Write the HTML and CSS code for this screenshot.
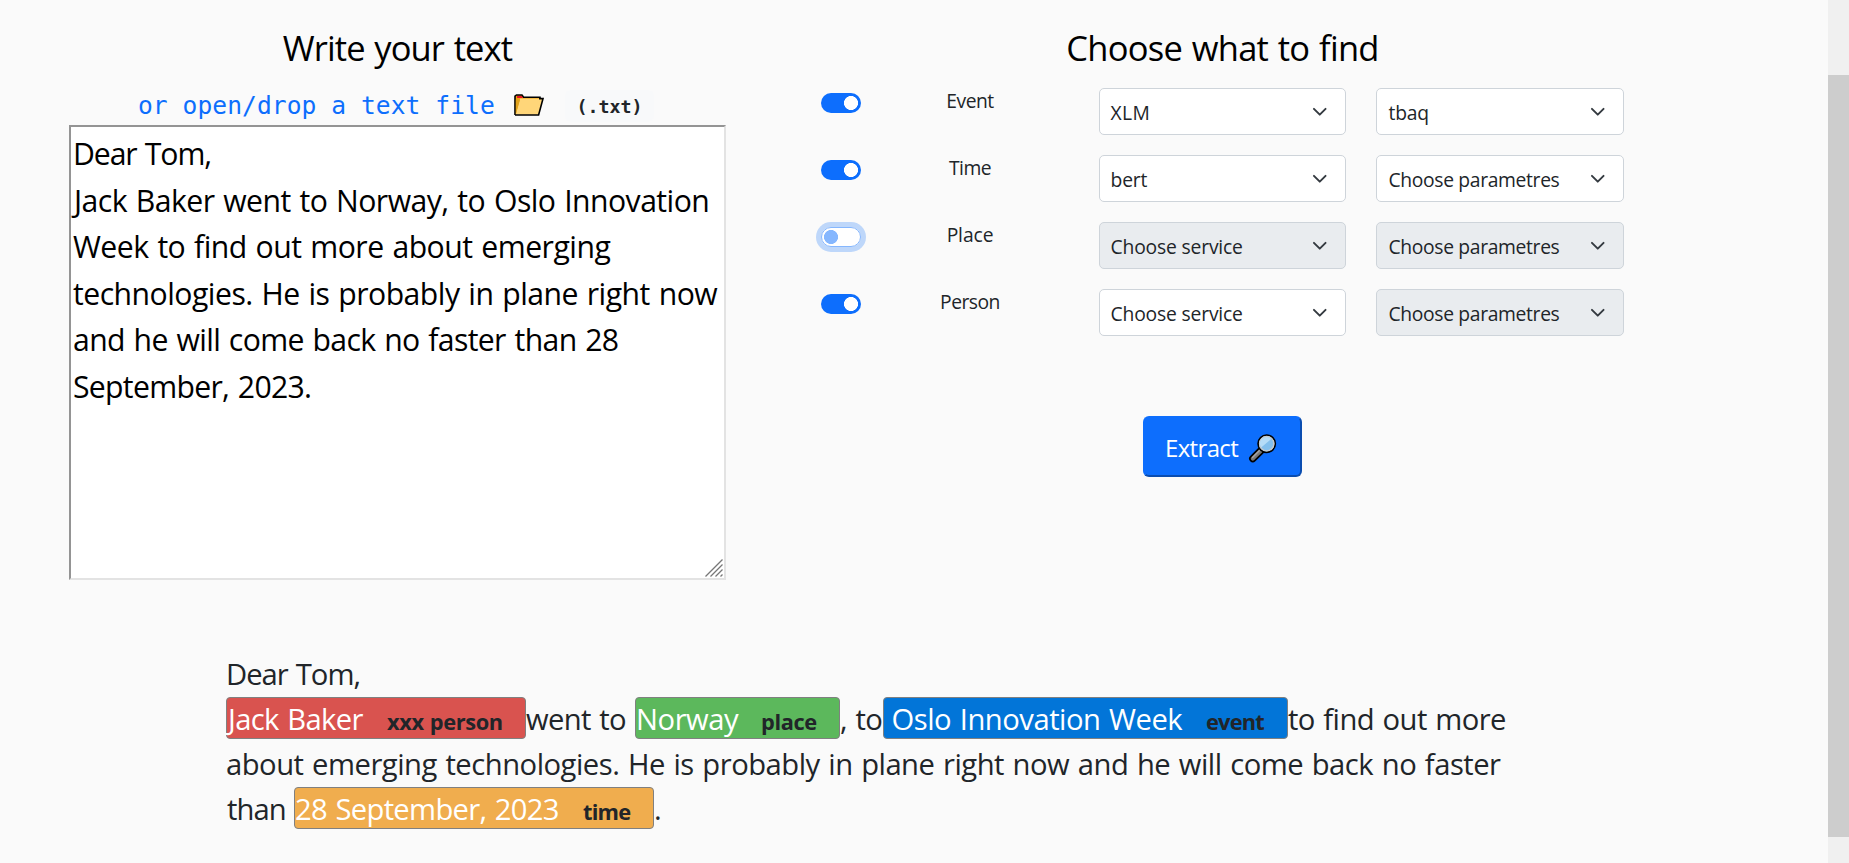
FILE: index.html
```
<!DOCTYPE html>
<html lang="en">
<head>
<meta charset="utf-8">
<title>Text extraction</title>
<link rel="stylesheet" href="styles.css">
</head>
<body>
<div class="page">
  <main class="content">
    <div class="top">
      <section class="editor">
        <h2 class="title title-write">Write your text</h2>
        <div class="file-row">
          <a class="file-link">or open/drop a text file</a>
          <svg class="folder" viewBox="0 0 30 22" width="30" height="22">
            <path d="M1 21V2.2L2.5 1H8l1.6 2.2H26V6" fill="#f0a30a" stroke="#000" stroke-width="1.6"/>
            <path d="M3 2h4.6l1.4 2H3z" fill="#e81224"/>
            <path d="M1.8 20 6.2 4.6H28.8L24.6 20.8H1.8z" fill="#ffd679"/>
            <path d="M1.8 20.5V5.4H6z" fill="#e0a21c"/>
            <path d="M1 21H24.6L29 4.6H25" fill="none" stroke="#000" stroke-width="1.6"/>
          </svg>
          <span class="badge">(.txt)</span>
        </div>
        <div class="textarea">
          <p class="ta1">Dear Tom,</p>
          <p class="ta2">Jack Baker went to Norway, to Oslo Innovation</p>
          <p class="ta3">Week to find out more about emerging</p>
          <p class="ta4">technologies. He is probably in plane right now</p>
          <p class="ta5">and he will come back no faster than 28</p>
          <p class="ta6">September, 2023.</p>
          <svg class="grip" viewBox="0 0 18 18" width="18" height="18"><path d="M.5 17.5l17-17M5.5 17.5l12-12M10.5 17.5l7-7M15.5 17.5l2-2" stroke="#777" stroke-width="1.3" fill="none"/></svg>
        </div>
      </section>
      <section class="chooser">
        <h2 class="title title-choose">Choose what to find</h2>
        <div class="row">
          <span class="switch on"></span><span class="label ev">Event</span>
          <div class="select"><span class="xlm">XLM</span><svg class="chev" viewBox="0 0 16 16"><path d="M2 5l6 6 6-6"/></svg></div>
          <div class="select param"><span>tbaq</span><svg class="chev" viewBox="0 0 16 16"><path d="M2 5l6 6 6-6"/></svg></div>
        </div>
        <div class="row">
          <span class="switch on"></span><span class="label ev">Time</span>
          <div class="select"><span>bert</span><svg class="chev" viewBox="0 0 16 16"><path d="M2 5l6 6 6-6"/></svg></div>
          <div class="select param"><span class="long">Choose parametres</span><svg class="chev" viewBox="0 0 16 16"><path d="M2 5l6 6 6-6"/></svg></div>
        </div>
        <div class="row">
          <span class="switch focus"></span><span class="label">Place</span>
          <div class="select disabled"><span>Choose service</span><svg class="chev" viewBox="0 0 16 16"><path d="M2 5l6 6 6-6"/></svg></div>
          <div class="select param disabled"><span class="long">Choose parametres</span><svg class="chev" viewBox="0 0 16 16"><path d="M2 5l6 6 6-6"/></svg></div>
        </div>
        <div class="row">
          <span class="switch on"></span><span class="label ev">Person</span>
          <div class="select"><span>Choose service</span><svg class="chev" viewBox="0 0 16 16"><path d="M2 5l6 6 6-6"/></svg></div>
          <div class="select param disabled"><span class="long">Choose parametres</span><svg class="chev" viewBox="0 0 16 16"><path d="M2 5l6 6 6-6"/></svg></div>
        </div>
        <div class="actions">
          <button class="extract"><span>Extract</span>
            <svg viewBox="0 0 30 30" width="30" height="30">
              <path d="M13.5 17 4.8 25.6" stroke="#000" stroke-width="7.4" stroke-linecap="round"/>
              <path d="M12.5 18 4.8 25.6" stroke="#777" stroke-width="4" stroke-linecap="round"/>
              <path d="M11.5 17.5 4.5 24.5" stroke="#a5a5a5" stroke-width="1.4" stroke-linecap="round"/>
              <circle cx="18.7" cy="10.7" r="8.6" fill="#9fd3f5" stroke="#000" stroke-width="1.7"/>
              <circle cx="18.7" cy="10.7" r="7.2" fill="#83bfec" stroke="#c4c8cc" stroke-width="1.3"/>
              <path d="M13.2 14.6a6.6 6.6 0 0 1 10-8.6z" fill="#b5dcf7"/>
            </svg>
          </button>
        </div>
      </section>
    </div>
    <section class="result">
      <div class="line"><span class="tight">Dear Tom,</span></div>
      <div class="line">
        <span class="tag person"><span class="word">Jack Baker</span><b>xxx person</b></span>
        <span class="went">went to</span>
        <span class="tag place"><span class="word">Norway</span><b>place</b></span>
        <span class="to">, to</span>
        <span class="tag event"><span class="word">Oslo Innovation Week</span><b>event</b></span>
        <span class="rest">to find out more</span>
      </div>
      <div class="line"><span class="full">about emerging technologies. He is probably in plane right now and he will come back no faster</span></div>
      <div class="line">
        <span class="than">than</span>
        <span class="tag time"><span class="word">28 September, 2023</span><b>time</b></span>
        <span class="dot">.</span>
      </div>
    </section>
  </main>
  <div class="scrollbar"><div class="thumb"></div></div>
</div>
</body>
</html>
```
FILE: styles.css
```
* { box-sizing: border-box; }
body {
  margin: 0;
  background: #fafafa;
  color: #212529;
  font-family: "Open Sans", "Noto Sans", sans-serif;
  font-size: 19.3px;
  overflow: hidden;
}
.page { display: flex; width: 1849px; height: 863px; }
.content { width: 1828px; }
.top { display: flex; gap: 95px; padding: 27px 0 0 69px; height: 652px; }
.editor { width: 657px; }
.chooser { width: 803px; }

.title {
  margin: 0;
  color: #000;
  font-size: 34.5px;
  font-weight: 400;
  line-height: 42px;
  text-align: center;
  white-space: nowrap;
  word-spacing: 1.5px;
}
.title-write { letter-spacing: -0.88px; }
.title-choose { letter-spacing: -0.75px; }

.file-row { display: flex; height: 42px; margin-top: 14px; padding: 0 0 0 69px; }
.file-link {
  width: 376px;
  padding-top: 2px;
  color: #0d6efd;
  font: 24.6px/42px "DejaVu Sans Mono", monospace;
  letter-spacing: 0.06px;
  white-space: nowrap;
}
.folder { margin-top: 11px; }
.badge {
  width: 89px;
  height: 32px;
  margin: 7px 0 0 21px;
  padding-top: 1px;
  border-radius: 6px;
  background: #f8f9fa;
  font: bold 18.3px/32px "DejaVu Sans Mono", monospace;
  text-align: center;
}

.textarea {
  position: relative;
  height: 455px;
  padding: 4px 2px;
  border: 2px solid #949494;
  border-right-color: #e3e3e3;
  border-bottom-color: #e3e3e3;
  background: #fff;
  color: #000;
  font-size: 30.2px;
  line-height: 46.5px;
  word-spacing: 1.5px;
}
.textarea p { margin: 0; white-space: nowrap; }
.ta1 { letter-spacing: -1.1px; }
.ta2 { letter-spacing: -0.55px; padding-left: 1px; }
.ta3 { letter-spacing: -0.52px; }
.ta4 { letter-spacing: -0.52px; }
.ta5 { letter-spacing: -0.64px; }
.ta6 { letter-spacing: -0.7px; }
.grip { position: absolute; right: 1px; bottom: 1px; }

.row { display: flex; height: 47px; margin-bottom: 20px; }
.title + .row { margin-top: 19px; }
.switch {
  width: 40px;
  height: 20px;
  margin-top: 5px;
  border-radius: 10px;
  background: radial-gradient(circle at 30px 10px, #fff 6.7px, #0d6efd 7.3px);
}
.switch.focus {
  border: 1px solid #86b7fe;
  background: radial-gradient(circle at 9px 9px, #86b7fe 6.7px, #fff 7.3px);
  box-shadow: 0 0 0 5px rgba(13, 110, 253, 0.25);
}
.label { width: 218px; padding-top: 1px; line-height: 24px; text-align: center; letter-spacing: -0.1px; }
.label.ev { letter-spacing: -0.5px; }
.select {
  display: flex;
  align-items: center;
  justify-content: space-between;
  width: 247px;
  margin-left: 20px;
  padding: 0 17.5px 0 10.5px;
  border: 1px solid #ced4da;
  border-radius: 5px;
  background: #fff;
  letter-spacing: -0.17px;
  white-space: nowrap;
}
.select span { padding-top: 2px; }
.select .xlm { letter-spacing: 0.4px; }
.select .long { letter-spacing: -0.34px; }
.select.param { width: 248px; margin-left: 30px; padding-left: 11.5px; }
.select.disabled { background: #e9ecef; }
.chev { width: 15.5px; height: 15.5px; fill: none; stroke: #343a40; stroke-width: 2; stroke-linecap: round; stroke-linejoin: round; }

.actions { display: flex; justify-content: center; margin-top: 80px; }
.extract {
  display: flex;
  align-items: center;
  width: 159px;
  height: 61px;
  padding: 0 0 0 20px;
  border: 2px solid;
  border-color: #0d6efd #0a4db0 #0a4db0 #0d6efd;
  border-radius: 6px;
  background: #0d6efd;
  color: #fff;
  font: 24px "Open Sans", sans-serif;
  letter-spacing: -0.65px;
}
.extract span { width: 83px; padding-top: 2px; text-align: left; }
.extract svg { margin-top: 2px; }

.result { padding-left: 226px; font-size: 29.2px; word-spacing: 1.5px; }
.line { display: flex; align-items: baseline; height: 45px; line-height: 45px; white-space: nowrap; }
.line > span { flex: none; }
.tight { letter-spacing: -1px; }
.full { letter-spacing: -0.49px; }
.went { width: 109px; letter-spacing: -0.65px; }
.to { width: 43px; letter-spacing: -0.6px; }
.rest { letter-spacing: -0.56px; }
.than { width: 68px; padding-left: 1px; letter-spacing: -0.95px; }
.tag {
  display: flex;
  align-items: baseline;
  height: 42px;
  border: 1px solid #808080;
  border-radius: 4px;
  color: #fff;
  line-height: 42px;
}
.tag b { color: #212529; font-size: 21.8px; letter-spacing: -0.4px; word-spacing: 1px; }
.person { width: 300px; background: #d9534f; }
.person .word { width: 160px; padding-left: 1px; letter-spacing: -0.65px; }
.place { width: 205px; background: #5cb85c; }
.place .word { width: 125px; letter-spacing: -0.45px; }
.event { width: 405px; background: #0275d8; }
.event .word { width: 322px; padding-left: 7.5px; letter-spacing: -0.48px; }
.event b { letter-spacing: -0.8px; }
.time { width: 360px; background: #f0ad4e; }
.time .word { width: 288px; letter-spacing: -0.68px; }
.time b { letter-spacing: -0.75px; }

.scrollbar { width: 21px; height: 863px; padding-top: 75px; background: #f0f0f0; }
.thumb { height: 762px; background: #cdcdcd; }
```
